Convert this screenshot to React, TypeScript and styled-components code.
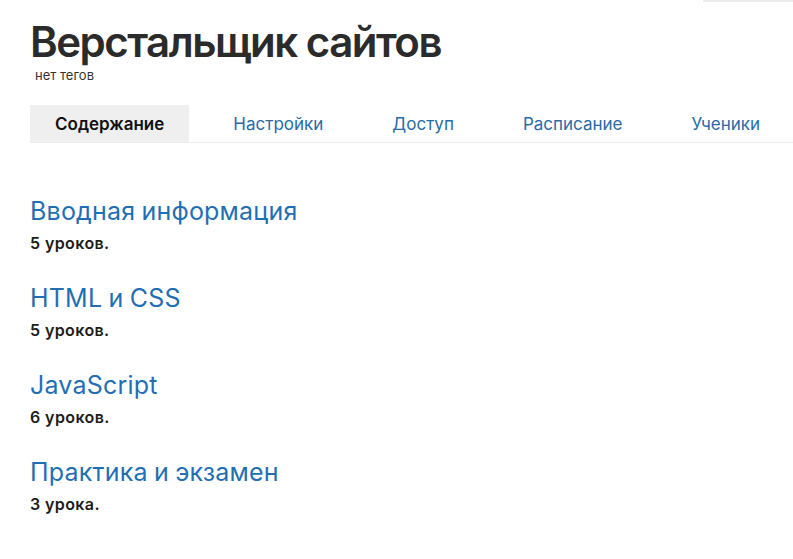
import React from "react";
import styled, { createGlobalStyle } from "styled-components";

const GlobalStyle = createGlobalStyle`
  html, body {
    margin: 0;
    padding: 0;
    background: #fff;
  }
  body {
    font-family: Inter, "Noto Sans", sans-serif;
    color: #222;
  }
`;

const Page = styled.div`
  position: relative;
  padding: 18px 0 0 30px;
`;

const TopStrip = styled.div`
  position: absolute;
  top: 0;
  right: 0;
  width: 90px;
  height: 2px;
  background: #ececec;
`;

const Header = styled.header`
  display: flex;
  flex-direction: column;
`;

const Title = styled.h1`
  margin: 0;
  font-size: 42px;
  line-height: 48px;
  font-weight: 600;
  color: #2b2b2b;
  letter-spacing: -1.5px;
`;

const Tags = styled.span`
  margin: 1px 0 0 5px;
  font-size: 13px;
  line-height: 16px;
  color: #333;
`;

const Tabs = styled.nav`
  display: flex;
  gap: 19px;
  margin-top: 22px;
  border-bottom: 1px solid #ececec;
`;

const Tab = styled.div<{ $active?: boolean }>`
  padding: 0 25px;
  height: 37px;
  display: flex;
  align-items: center;
  font-size: 17px;
  font-weight: ${({ $active }) => ($active ? 600 : 400)};
  color: ${({ $active }) => ($active ? "#111" : "#2a6aa6")};
  background: ${({ $active }) => ($active ? "#efefef" : "transparent")};
  white-space: nowrap;
`;

const Sections = styled.div`
  display: flex;
  flex-direction: column;
  gap: 29px;
  margin-top: 53px;
`;

const Section = styled.div`
  display: flex;
  flex-direction: column;
`;

const SectionTitle = styled.a`
  font-size: 25px;
  line-height: 30px;
  font-weight: 400;
  letter-spacing: 0.2px;
  word-spacing: -1px;
  color: #1f6fb2;
  text-decoration: none;
`;

const Lessons = styled.span`
  margin-top: 6px;
  font-size: 16px;
  line-height: 22px;
  font-weight: 600;
  letter-spacing: 0.4px;
  color: #1c1c1c;
`;

const tabs = ["Содержание", "Настройки", "Доступ", "Расписание", "Ученики"];

const sections = [
  { title: "Вводная информация", lessons: "5 уроков." },
  { title: "HTML и CSS", lessons: "5 уроков." },
  { title: "JavaScript", lessons: "6 уроков." },
  { title: "Практика и экзамен", lessons: "3 урока." },
];

const App = () => {
  return (
    <>
      <GlobalStyle />
      <Page>
        <TopStrip />
        <Header>
          <Title>Верстальщик сайтов</Title>
          <Tags>нет тегов</Tags>
        </Header>

        <Tabs>
          {tabs.map((t, i) => (
            <Tab key={t} $active={i === 0}>
              {t}
            </Tab>
          ))}
        </Tabs>

        <Sections>
          {sections.map((s) => (
            <Section key={s.title}>
              <SectionTitle href="#">{s.title}</SectionTitle>
              <Lessons>{s.lessons}</Lessons>
            </Section>
          ))}
        </Sections>
      </Page>
    </>
  );
};

export default App;
